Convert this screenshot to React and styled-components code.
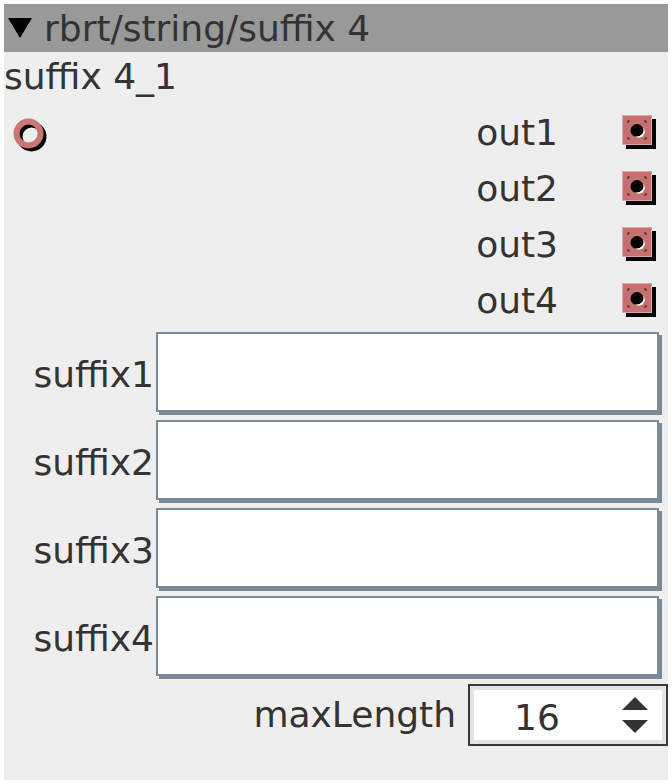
import React from "react";
import styled, { createGlobalStyle } from "styled-components";

const GlobalStyle = createGlobalStyle`
  html, body { margin: 0; padding: 0; background: #ffffff; }
  body { padding: 4px; }
  * { box-sizing: border-box; }
`;

const Panel = styled.div`
  width: 664px;
  height: 776px;
  background: #eeeeee;
  font-family: "DejaVu Sans", "Verdana", sans-serif;
  font-size: 36px;
  color: #333333;
  display: flex;
  flex-direction: column;
`;

const Header = styled.div`
  height: 48px;
  background: #999999;
  display: flex;
  align-items: center;
  gap: 12px;
  padding-left: 4px;
  color: #333333;
`;

const Title = styled.div`
  height: 52px;
  display: flex;
  align-items: center;
  padding-left: 0;
  padding-bottom: 4px;
`;

const PortsArea = styled.div`
  display: grid;
  grid-template-columns: 1fr auto;
  height: 224px;
`;

const InletCol = styled.div`
  padding-left: 9px;
  padding-top: 14px;
`;

const OutletCol = styled.div`
  display: flex;
  flex-direction: column;
`;

const OutletRow = styled.div`
  height: 56px;
  display: flex;
  align-items: center;
  justify-content: flex-end;
`;

const OutletLabel = styled.span`
  margin-right: 64px;
`;

const OutletIconWrap = styled.div`
  width: 46px;
  display: flex;
  padding-top: 2px;
`;

const Form = styled.div`
  display: grid;
  grid-template-columns: 150px 503px;
  column-gap: 2px;
  row-gap: 8px;
  margin-top: 4px;
`;

const FieldLabel = styled.label`
  display: flex;
  align-items: center;
  justify-content: flex-end;
  height: 80px;
  padding-top: 4px;
`;

const TextInput = styled.div`
  height: 80px;
  background: #ffffff;
  border: 2px solid #7b8a99;
  box-shadow: 3px 3px 0 #7b8a99;
`;

const SpinRow = styled.div`
  display: flex;
  justify-content: flex-end;
  align-items: center;
  gap: 12px;
  margin-top: 8px;
  padding-right: 0;
`;

const SpinLabel = styled.span`
  padding-bottom: 2px;
`;

const SpinBox = styled.div`
  width: 200px;
  height: 62px;
  border: 2px solid #3a3a3a;
  background: #ffffff;
  box-shadow: inset 0 0 0 4px #e4e4e4;
  display: flex;
  align-items: center;
  justify-content: space-between;
  padding-left: 44px;
  padding-right: 18px;
`;

const SpinValue = styled.span`
  padding-top: 4px;
`;

const Arrows = styled.div`
  display: flex;
  flex-direction: column;
  gap: 10px;
`;

function Triangle() {
  return (
    <svg width="24" height="22" viewBox="0 0 24 22">
      <polygon points="0,1 24,1 12,21" fill="#000" />
    </svg>
  );
}

function Inlet() {
  return (
    <svg width="40" height="40" viewBox="0 0 40 40">
      <circle cx="18.5" cy="18.5" r="12" fill="none" stroke="#000" strokeWidth="6" />
      <circle cx="15.5" cy="15.5" r="12" fill="none" stroke="#cc7575" strokeWidth="6" />
    </svg>
  );
}

function Outlet() {
  const m = "#3a2a2a";
  return (
    <svg width="36" height="36" viewBox="0 0 36 36">
      <rect x="4" y="4" width="30" height="30" fill="#000" />
      <rect x="0.5" y="0.5" width="29" height="29" fill="#c86f6f" stroke="#e3a3a3" />
      <path d={`M6 8 V6 H8 M22 6 H24 V8 M24 22 V24 H22 M8 24 H6 V22`} stroke={m} strokeWidth="1.2" fill="none" />
      <circle cx="15" cy="15.5" r="6.5" fill="#000" />
      <path d="M12.5 21 A6.5 6.5 0 0 0 21 12.5 A5 5 0 0 1 12.5 21 Z" fill="#ffffff" />
    </svg>
  );
}

function Arrow({ up }) {
  return (
    <svg width="26" height="13" viewBox="0 0 26 13">
      <polygon points={up ? "0,13 26,13 13,0" : "0,0 26,0 13,13"} fill="#333" />
    </svg>
  );
}

export default function App() {
  const outs = ["out1", "out2", "out3", "out4"];
  const fields = ["suffix1", "suffix2", "suffix3", "suffix4"];
  return (
    <>
      <GlobalStyle />
      <Panel>
        <Header>
          <Triangle />
          <span>rbrt/string/suffix 4</span>
        </Header>
        <Title>suffix 4_1</Title>
        <PortsArea>
          <InletCol>
            <Inlet />
          </InletCol>
          <OutletCol>
            {outs.map((o) => (
              <OutletRow key={o}>
                <OutletLabel>{o}</OutletLabel>
                <OutletIconWrap>
                  <Outlet />
                </OutletIconWrap>
              </OutletRow>
            ))}
          </OutletCol>
        </PortsArea>
        <Form>
          {fields.map((f) => (
            <React.Fragment key={f}>
              <FieldLabel>{f}</FieldLabel>
              <TextInput />
            </React.Fragment>
          ))}
        </Form>
        <SpinRow>
          <SpinLabel>maxLength</SpinLabel>
          <SpinBox>
            <SpinValue>16</SpinValue>
            <Arrows>
              <Arrow up />
              <Arrow />
            </Arrows>
          </SpinBox>
        </SpinRow>
      </Panel>
    </>
  );
}
